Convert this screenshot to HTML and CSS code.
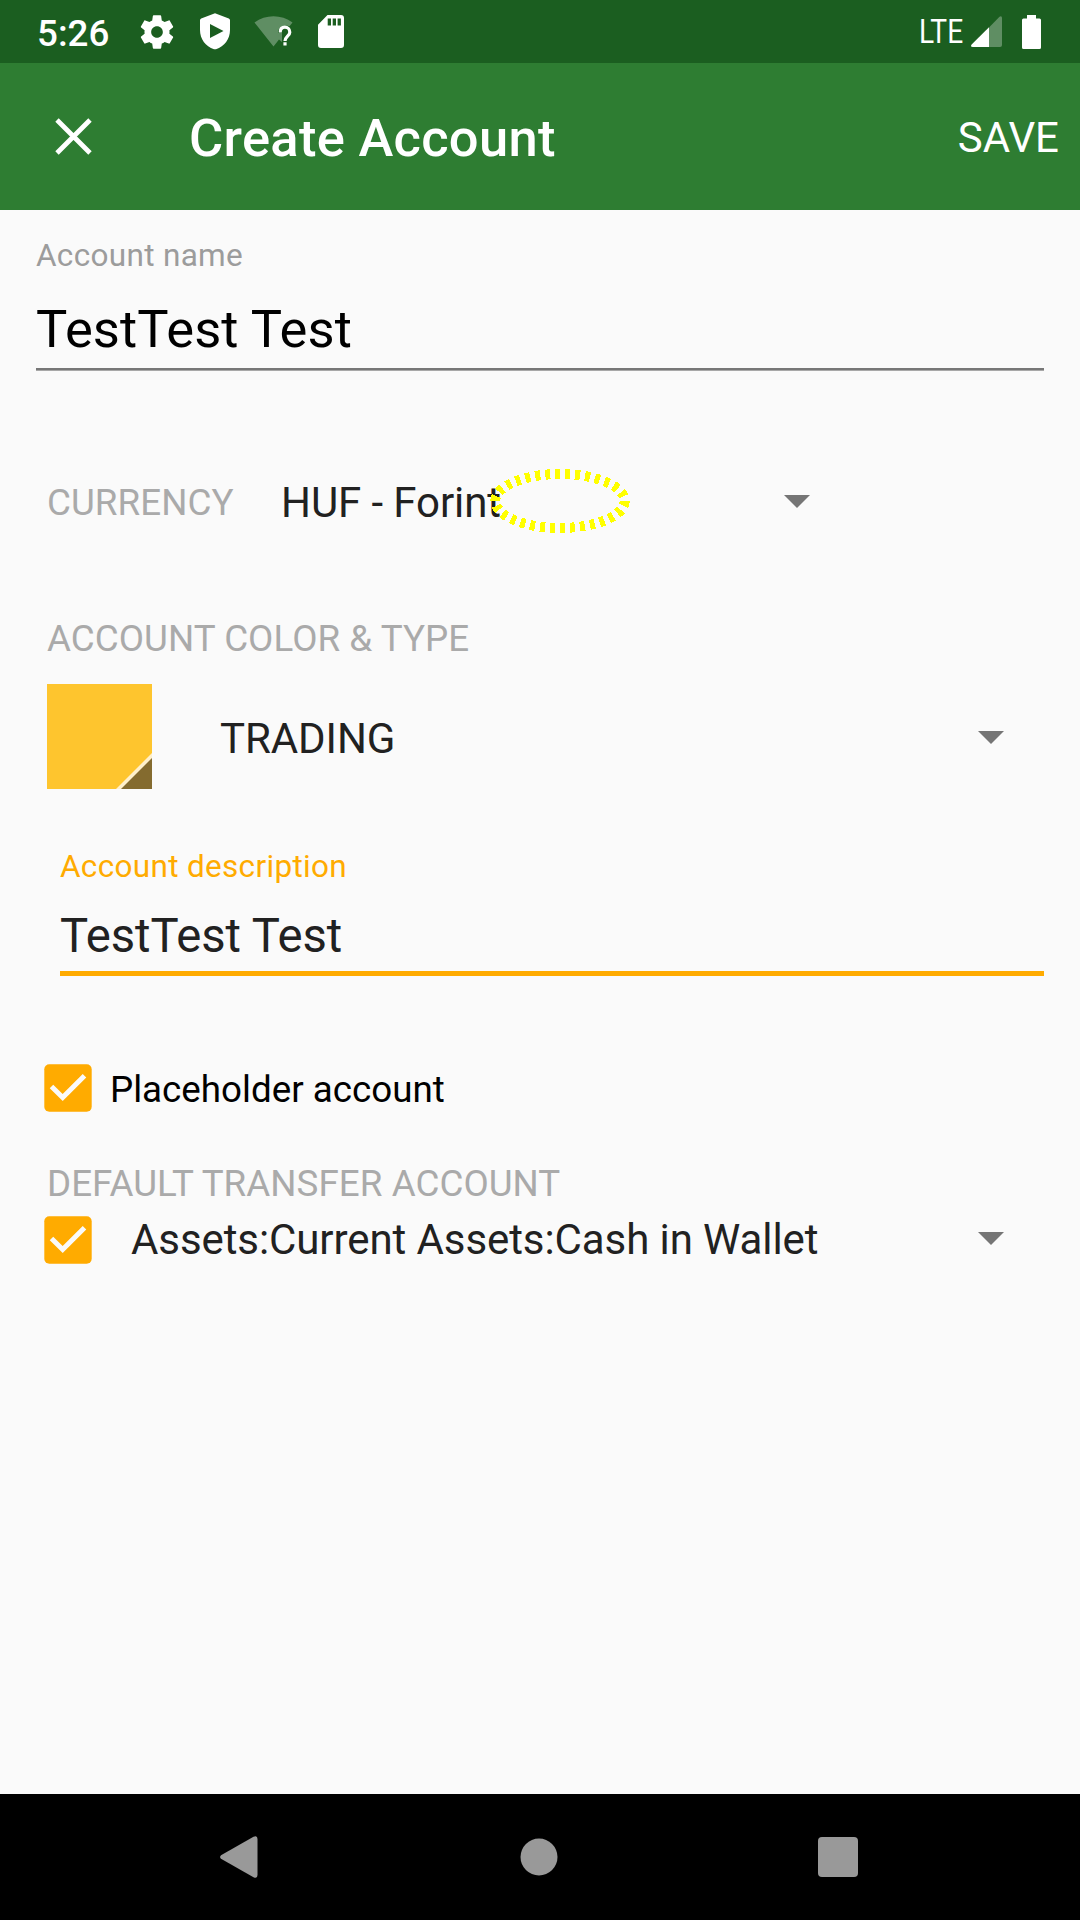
FILE: index.html
```html
<!DOCTYPE html>
<html lang="en">
<head>
<meta charset="utf-8">
<title>Create Account</title>
<link rel="stylesheet" href="styles.css">
</head>
<body>
<div class="screen">
  <div class="status-bar">
    <span class="clock">5:26</span>
    <svg class="icon-settings" width="40" height="40" viewBox="0 0 24 24"><path fill="#fff" d="M19.43 12.98c.04-.32.07-.64.07-.98s-.03-.66-.07-.98l2.11-1.65c.19-.15.24-.42.12-.64l-2-3.46c-.12-.22-.39-.3-.61-.22l-2.49 1c-.52-.4-1.08-.73-1.69-.98l-.38-2.65C14.46 2.18 14.25 2 14 2h-4c-.25 0-.46.18-.49.42l-.38 2.65c-.61.25-1.17.59-1.69.98l-2.49-1c-.23-.09-.49 0-.61.22l-2 3.46c-.13.22-.07.49.12.64l2.11 1.65c-.04.32-.07.65-.07.98s.03.66.07.98l-2.11 1.65c-.19.15-.24.42-.12.64l2 3.46c.12.22.39.3.61.22l2.49-1c.52.4 1.08.73 1.69.98l.38 2.65c.03.24.24.42.49.42h4c.25 0 .46-.18.49-.42l.38-2.65c.61-.25 1.17-.59 1.69-.98l2.49 1c.23.09.49 0 .61-.22l2-3.46c.12-.22.07-.49-.12-.64l-2.11-1.65zM12 15.5c-1.93 0-3.5-1.57-3.5-3.5s1.570-3.500 3.500-3.500 3.500 1.570 3.500 3.500-1.570 3.500-3.500 3.500z"/></svg>
    <svg class="icon-shield" width="30" height="37" viewBox="0 0 30 37"><path fill="#fff" fill-rule="evenodd" d="M15 .3 28.800 5.400Q30 6 30 7.200V17C30 26 24.500 33.500 16 36.200Q15 36.500 14 36.200C5.500 33.500 0 26 0 17V7.200Q0 6 1.200 5.400ZM10 11V25L23.500 18Z"/></svg>
    <svg class="icon-wifi" width="40" height="34" viewBox="0 0 40 34"><path fill="#fff" fill-opacity=".3" d="M.5 7.500C11.500-1 27.500-1 38.500 7.500L35.500 11.200C29 9 24 13 24 18H28V27L25 24.500 19.500 31.500Z"/><path fill="none" stroke="#fff" stroke-width="3.200" d="M26.200 17.400C26.200 13.200 28.500 12.200 30.900 12.200S35.800 13.800 35.800 17.200C35.800 21 31 21.400 31 26"/><path fill="#fff" d="M29.400 27.300h3.200v3.200h-3.200z"/></svg>
    <svg class="icon-sd" width="26" height="33" viewBox="0 0 26 33"><path fill="#fff" fill-rule="evenodd" d="M9.500 0H23Q26 0 26 3V30Q26 33 23 33H3Q0 33 0 30V9.800ZM9.700 3.500V10.500H13V3.500ZM14.700 3.500V10.500H18V3.500ZM19.600 3.500V10.500H22.900V3.500Z"/></svg>
    <span class="network">LTE</span>
    <svg class="icon-signal" width="31" height="31" viewBox="0 0 31 31"><path fill="#fff" fill-opacity=".3" d="M18 11.500 28.500.7Q31-.5 31 2V29Q31 31 29 31H18Z"/><path fill="#fff" d="M18 11.300V31H1.800Q-1 31 .6 28.500Z"/></svg>
    <svg class="icon-battery" width="19" height="34" viewBox="0 0 19 34"><path fill="#fff" d="M5 0H14V3.500H17.500Q19 3.500 19 5V32.500Q19 34 17.500 34H1.500Q0 34 0 32.500V5Q0 3.500 1.500 3.500H5Z"/></svg>
  </div>

  <div class="app-bar">
    <svg class="icon-close" width="37" height="37" viewBox="0 0 37 37"><path fill="none" stroke="#fff" stroke-width="4.800" d="M2 2 35 35M35 2 2 35"/></svg>
    <h1 class="title">Create Account</h1>
    <span class="save">SAVE</span>
  </div>

  <div class="form">
    <div class="field">
      <div class="field-label">Account name</div>
      <div class="field-value">TestTest Test</div>
    </div>

    <div class="currency-row">
      <span class="caption">CURRENCY</span>
      <div class="spinner currency-spinner">
        <span>HUF - Forint</span>
        <svg class="arrow" width="26" height="13" viewBox="0 0 26 13"><path fill="#757575" d="M0 0H26L13 13Z"/></svg>
        <svg class="focus-ring" width="142" height="68" viewBox="0 0 142 68" shape-rendering="crispEdges"><ellipse cx="71" cy="34" rx="64.700" ry="27" fill="none" stroke="#ff0" stroke-width="10" stroke-dasharray="5 5"/></svg>
      </div>
    </div>

    <div class="caption type-caption">ACCOUNT COLOR &amp; TYPE</div>
    <div class="type-row">
      <svg class="swatch" width="105" height="105" viewBox="0 0 105 105"><path fill="#fec52e" d="M0 0H105V105H0Z"/><path fill="#fff0cb" d="M105 69V105H69Z"/><path fill="#846b2f" d="M105 74V105H74Z"/></svg>
      <div class="spinner type-spinner">
        <span>TRADING</span>
        <svg class="arrow" width="26" height="13" viewBox="0 0 26 13"><path fill="#757575" d="M0 0H26L13 13Z"/></svg>
      </div>
    </div>

    <div class="field field-focused">
      <div class="field-label">Account description</div>
      <div class="field-value">TestTest Test</div>
    </div>

    <div class="check-row placeholder-row">
      <svg class="checkbox" width="48" height="48" viewBox="0 0 48 48"><rect x=".3" y=".3" width="47.400" height="47.400" rx="5" fill="#ffab00"/><path fill="none" stroke="#fafafa" stroke-width="5" d="M7.500 22.500 18.700 33.500 40.500 11.700"/></svg>
      <span class="check-label">Placeholder account</span>
    </div>

    <div class="caption transfer-caption">DEFAULT TRANSFER ACCOUNT</div>
    <div class="check-row transfer-row">
      <svg class="checkbox" width="48" height="48" viewBox="0 0 48 48"><rect x=".3" y=".3" width="47.400" height="47.400" rx="5" fill="#ffab00"/><path fill="none" stroke="#fafafa" stroke-width="5" d="M7.500 22.500 18.700 33.500 40.500 11.700"/></svg>
      <div class="spinner transfer-spinner">
        <span>Assets:Current Assets:Cash in Wallet</span>
        <svg class="arrow" width="26" height="13" viewBox="0 0 26 13"><path fill="#757575" d="M0 0H26L13 13Z"/></svg>
      </div>
    </div>
  </div>

  <div class="nav-bar">
    <svg width="38" height="42" viewBox="0 0 38 42"><path fill="#999" d="M1 19.200 33.500.8Q37.500-1 37.500 3V39Q37.500 43 33.500 41.200L1 22.800Q-.8 21 1 19.200Z"/></svg>
    <svg class="nav-home" width="38" height="38" viewBox="0 0 38 38"><circle cx="19" cy="19" r="18.500" fill="#999"/></svg>
    <svg width="40" height="40" viewBox="0 0 40 40"><rect width="40" height="40" rx="4" fill="#999"/></svg>
  </div>
</div>
</body>
</html>
```
FILE: styles.css
```css
* { box-sizing: border-box; }

body {
  margin: 0;
  font-family: Roboto, sans-serif;
  color: #212121;
}

svg { display: block; flex: none; }

.screen {
  display: flex;
  flex-direction: column;
  width: 1080px;
  height: 1920px;
  background: #fafafa;
}

.status-bar {
  display: flex;
  align-items: center;
  height: 63px;
  padding: 0 39px 0 37px;
  background: #1b5e20;
  color: #fff;
}

.clock {
  width: 100px;
  padding-top: 4px;
  font-size: 36.75px;
  font-weight: 500;
  line-height: 44px;
}

.icon-shield { margin-left: 23px; }
.icon-wifi { margin-left: 24px; }
.icon-sd { margin-left: 24px; }

.network {
  width: 45px;
  margin-left: auto;
  font-size: 32.500px;
  line-height: 40px;
  transform: scaleX(.865);
  transform-origin: left;
}

.icon-signal { margin-left: 7px; }
.icon-battery { margin-left: 20px; }

.app-bar {
  display: flex;
  align-items: center;
  height: 147px;
  padding: 0 21px 0 55px;
  background: #2e7d32;
  color: #fff;
}

.title {
  margin: 0 0 0 97px;
  padding-top: 3px;
  font-size: 52.500px;
  font-weight: 500;
  line-height: 62px;
  letter-spacing: .28px;
}

.save {
  margin-left: auto;
  padding-top: 2px;
  font-size: 42px;
  line-height: 50px;
}

.form {
  flex: 1;
  padding: 27px 36px 0;
}

.field-label {
  font-size: 31.500px;
  line-height: 38px;
  letter-spacing: .32px;
  color: #9c9c9c;
}

.field-value {
  margin-top: 23px;
  padding-bottom: 8px;
  border-bottom: 2px solid #777;
  box-shadow: 0 1px #a8a8a8;
  font-size: 52.500px;
  line-height: 62px;
  letter-spacing: .1px;
  color: #000;
}

.field-focused {
  margin: 59px 0 0 24px;
}

.field-focused .field-label { color: #ffab00; }

.field-focused .field-value {
  margin-top: 22px;
  padding-bottom: 7px;
  border-bottom: 5px solid #ffab00;
  box-shadow: none;
  font-size: 47.250px;
  line-height: 56px;
  letter-spacing: -.08px;
  color: #212121;
}

.caption {
  font-size: 36.750px;
  line-height: 44px;
  letter-spacing: .05px;
  color: #aaa;
}

.currency-row {
  display: flex;
  align-items: center;
  height: 50px;
  margin-top: 108px;
  padding-left: 11px;
}

.currency-row .caption { width: 234px; }

.spinner {
  display: flex;
  align-items: center;
  justify-content: space-between;
  font-size: 42px;
  line-height: 50px;
  letter-spacing: -.085px;
}

.arrow { margin-bottom: 3px; }

.currency-spinner {
  position: relative;
  width: 529px;
}

.focus-ring {
  position: absolute;
  left: 207.600px;
  top: -11px;
}

.type-caption {
  margin-top: 89px;
  padding-left: 11px;
}

.type-row {
  display: flex;
  align-items: center;
  margin-top: 23px;
  padding-left: 11px;
}

.type-spinner {
  width: 784px;
  margin-left: 68px;
  padding-top: 4px;
}

.check-row {
  display: flex;
  align-items: center;
  height: 48px;
  padding-left: 8px;
}

.placeholder-row { margin-top: 88px; }

.check-label {
  margin-left: 18px;
  padding-top: 3px;
  font-size: 36.750px;
  line-height: 44px;
  color: #000;
}

.transfer-caption {
  margin-top: 50px;
  padding-left: 11px;
}

.transfer-row { margin-top: 10px; }

.transfer-spinner {
  width: 873px;
  margin-left: 39px;
}

.nav-bar {
  display: flex;
  align-items: center;
  justify-content: space-between;
  height: 126px;
  padding: 0 222px 0 219.500px;
  background: #000;
}

.nav-home { margin-left: 3px; }
```
